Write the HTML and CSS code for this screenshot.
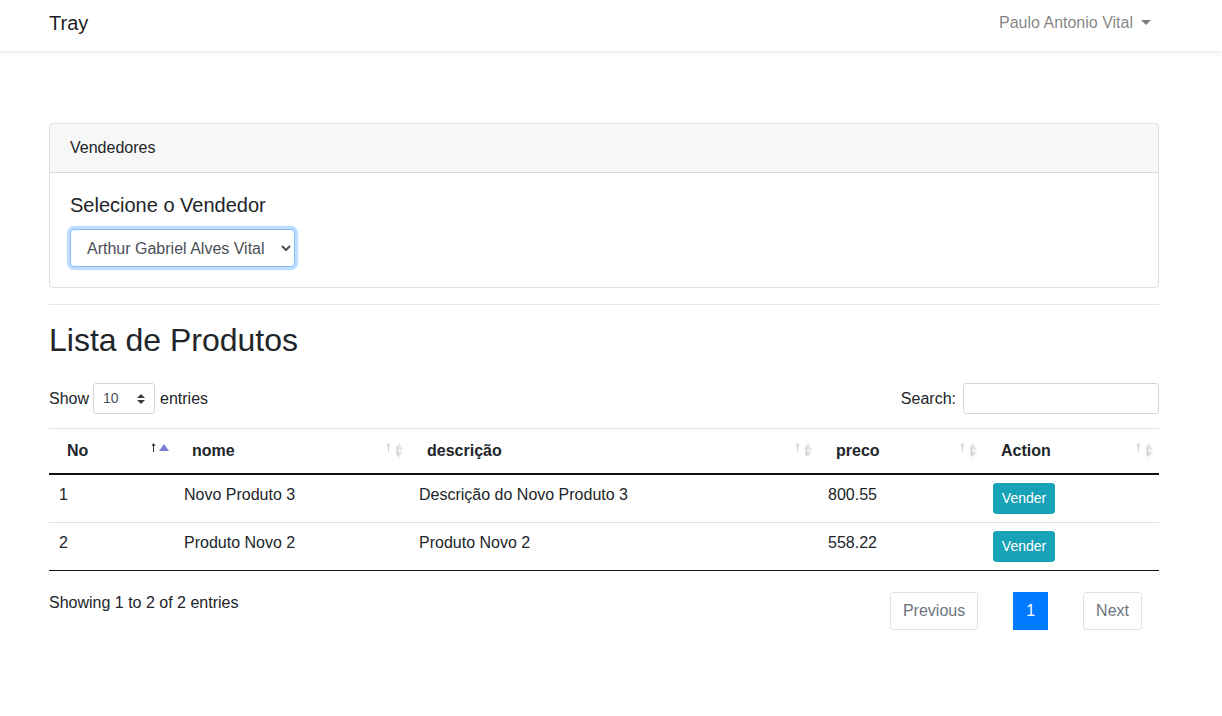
FILE: index.html
```html
<!DOCTYPE html>
<html lang="pt">
<head>
<meta charset="utf-8">
<title>Tray</title>
<link rel="stylesheet" href="styles.css">
</head>
<body>
<nav class="navbar">
  <div class="navbar-inner">
    <a class="brand">Tray</a>
    <a class="user">Paulo Antonio Vital <span class="caret"></span></a>
  </div>
</nav>

<main class="container">
  <section class="card">
    <div class="card-header">Vendedores</div>
    <div class="card-body">
      <h5 class="card-title">Selecione o Vendedor</h5>
      <select class="vendor-select">
        <option>Arthur Gabriel Alves Vital</option>
      </select>
    </div>
  </section>

  <hr class="divider">

  <h2 class="page-title">Lista de Produtos</h2>

  <div class="dt-controls">
    <div class="dt-length">
      Show
      <span class="small-select">
        <span class="small-select-value">10</span>
        <svg width="8" height="10" viewBox="0 0 8 10"><path d="M4 0 L8 4 H0 Z M4 10 L0 6 H8 Z" fill="#343a40"/></svg>
      </span>
      entries
    </div>
    <div class="dt-search">
      Search:
      <span class="search-input"></span>
    </div>
  </div>

  <table class="dt-table">
    <colgroup>
      <col class="c1"><col class="c2"><col class="c3"><col class="c4"><col class="c5">
    </colgroup>
    <thead>
      <tr>
        <th><div class="th-inner"><span>No</span>
          <svg class="sort" width="18" height="16" viewBox="0 0 18 16"><path d="M2.5 2 V10 M1 4 L2.5 1.5 L4 4" stroke="#333" stroke-width="1" fill="none"/><polygon points="13,2 18,9 8,9" fill="#7a80d8"/></svg>
        </div></th>
        <th><div class="th-inner"><span>nome</span>
          <svg class="sort" width="18" height="16" viewBox="0 0 18 16"><path d="M2.5 2 V10 M1 4 L2.5 1.5 L4 4" stroke="#cfcfcf" stroke-width="1" fill="none"/><polygon points="13,1 17,8 9,8" fill="#e6e6e6"/><polygon points="9,9 17,9 13,16" fill="#e6e6e6"/><path d="M11.5 4 V13 M10 11 L11.5 13.5 L13 11" stroke="#cfcfcf" stroke-width="1" fill="none"/></svg>
        </div></th>
        <th><div class="th-inner"><span>descrição</span>
          <svg class="sort" width="18" height="16" viewBox="0 0 18 16"><path d="M2.5 2 V10 M1 4 L2.5 1.5 L4 4" stroke="#cfcfcf" stroke-width="1" fill="none"/><polygon points="13,1 17,8 9,8" fill="#e6e6e6"/><polygon points="9,9 17,9 13,16" fill="#e6e6e6"/><path d="M11.5 4 V13 M10 11 L11.5 13.5 L13 11" stroke="#cfcfcf" stroke-width="1" fill="none"/></svg>
        </div></th>
        <th><div class="th-inner"><span>preco</span>
          <svg class="sort" width="18" height="16" viewBox="0 0 18 16"><path d="M2.5 2 V10 M1 4 L2.5 1.5 L4 4" stroke="#cfcfcf" stroke-width="1" fill="none"/><polygon points="13,1 17,8 9,8" fill="#e6e6e6"/><polygon points="9,9 17,9 13,16" fill="#e6e6e6"/><path d="M11.5 4 V13 M10 11 L11.5 13.5 L13 11" stroke="#cfcfcf" stroke-width="1" fill="none"/></svg>
        </div></th>
        <th><div class="th-inner"><span>Action</span>
          <svg class="sort" width="18" height="16" viewBox="0 0 18 16"><path d="M2.5 2 V10 M1 4 L2.5 1.5 L4 4" stroke="#cfcfcf" stroke-width="1" fill="none"/><polygon points="13,1 17,8 9,8" fill="#e6e6e6"/><polygon points="9,9 17,9 13,16" fill="#e6e6e6"/><path d="M11.5 4 V13 M10 11 L11.5 13.5 L13 11" stroke="#cfcfcf" stroke-width="1" fill="none"/></svg>
        </div></th>
      </tr>
    </thead>
    <tbody>
      <tr>
        <td>1</td>
        <td>Novo Produto 3</td>
        <td>Descrição do Novo Produto 3</td>
        <td>800.55</td>
        <td><button class="btn-info">Vender</button></td>
      </tr>
      <tr>
        <td>2</td>
        <td>Produto Novo 2</td>
        <td>Produto Novo 2</td>
        <td>558.22</td>
        <td><button class="btn-info">Vender</button></td>
      </tr>
    </tbody>
  </table>

  <div class="dt-footer">
    <div class="dt-info">Showing 1 to 2 of 2 entries</div>
    <div class="pagination">
      <span class="page-btn">Previous</span>
      <span class="page-btn active">1</span>
      <span class="page-btn">Next</span>
    </div>
  </div>
</main>
</body>
</html>
```

FILE: styles.css
```css
* { box-sizing: border-box; }

html, body {
  margin: 0;
  padding: 0;
  background: #fff;
}

body {
  font-family: "Liberation Sans", Arial, sans-serif;
  font-size: 16px;
  line-height: 1.5;
  color: #212529;
}

.navbar {
  height: 51px;
  background: #fff;
  box-shadow: 0 2px 4px rgba(0, 0, 0, 0.075);
}

.navbar-inner {
  width: 1110px;
  margin-left: 49px;
  height: 45px;
  display: flex;
  align-items: center;
  justify-content: space-between;
}

.brand {
  font-size: 20px;
  line-height: 30px;
  color: rgba(0, 0, 0, 0.9);
}

.user {
  font-size: 16px;
  line-height: 24px;
  color: rgba(0, 0, 0, 0.5);
  margin-right: 8px;
  display: flex;
  align-items: center;
}

.caret {
  display: inline-block;
  margin-left: 8px;
  width: 0;
  height: 0;
  border-top: 5px solid rgba(0, 0, 0, 0.5);
  border-left: 5px solid transparent;
  border-right: 5px solid transparent;
}

.container {
  width: 1110px;
  margin-left: 49px;
}

.card {
  margin-top: 72px;
  border: 1px solid rgba(0, 0, 0, 0.125);
  border-radius: 4px;
}

.card-header {
  padding: 12px 20px;
  background: rgba(0, 0, 0, 0.03);
  border-bottom: 1px solid rgba(0, 0, 0, 0.125);
  line-height: 24px;
}

.card-body {
  padding: 20px;
}

.card-title {
  margin: 0 0 12px;
  font-size: 20px;
  font-weight: 500;
  line-height: 24px;
}

.vendor-select {
  display: block;
  width: 225px;
  height: 38px;
  padding: 6px 12px;
  font-family: "Liberation Sans", Arial, sans-serif;
  font-size: 16px;
  color: #495057;
  background: #fff;
  border: 1px solid #80bdff;
  border-radius: 4px;
  box-shadow: 0 0 0 3.2px rgba(0, 123, 255, 0.25);
  outline: none;
}

.divider {
  margin: 16px 0;
  border: 0;
  border-top: 1px solid rgba(0, 0, 0, 0.1);
}

.page-title {
  margin: 0 0 8px;
  font-size: 32px;
  font-weight: 500;
  line-height: 38.4px;
}

.dt-controls {
  margin-top: 24px;
  display: flex;
  justify-content: space-between;
  align-items: center;
  height: 31px;
}

.dt-length, .dt-search {
  display: flex;
  align-items: center;
}

.small-select {
  display: inline-flex;
  align-items: center;
  justify-content: space-between;
  width: 62px;
  height: 31px;
  margin: 0 5px 0 4px;
  padding: 0 9px 0 9px;
  border: 1px solid #ced4da;
  border-radius: 3.2px;
  font-size: 14px;
  color: #495057;
}

.search-input {
  display: inline-block;
  width: 196px;
  height: 31px;
  margin-left: 7px;
  border: 1px solid #ced4da;
  border-radius: 3.2px;
}

.dt-table {
  margin-top: 14px;
  width: 1110px;
  table-layout: fixed;
  border-collapse: collapse;
}

.c1 { width: 125px; }
.c2 { width: 235px; }
.c3 { width: 409px; }
.c4 { width: 165px; }
.c5 { width: 176px; }

.dt-table th {
  border-top: 1px solid #dee2e6;
  border-bottom: 2px solid #111;
  padding: 10px 5px 10px 18px;
  text-align: left;
  font-weight: bold;
  vertical-align: top;
}

.th-inner {
  display: flex;
  justify-content: space-between;
  align-items: flex-start;
}

.sort {
  margin-top: 3px;
  flex: none;
}

.dt-table td {
  padding: 8px 10px;
  vertical-align: top;
}

.dt-table tbody tr + tr td {
  border-top: 1px solid #dee2e6;
}

.dt-table tbody tr:last-child td {
  border-bottom: 1px solid #111;
}

.btn-info {
  display: block;
  height: 31px;
  width: 62px;
  padding: 0;
  font-family: "Liberation Sans", Arial, sans-serif;
  font-size: 14px;
  line-height: 29px;
  color: #fff;
  background: #17a2b8;
  border: 1px solid #17a2b8;
  border-radius: 3.2px;
}

.dt-footer {
  display: flex;
  justify-content: space-between;
  align-items: flex-start;
}

.dt-info {
  margin-top: 20px;
}

.pagination {
  margin-top: 21px;
  margin-right: 17px;
  display: flex;
  gap: 35px;
}

.page-btn {
  display: block;
  padding: 6px 12px;
  line-height: 24px;
  color: #6c757d;
  border: 1px solid #dee2e6;
  border-radius: 3px;
  background: #fff;
}

.page-btn.active {
  color: #fff;
  background: #007bff;
  border-color: #007bff;
  border-radius: 0;
}
```
